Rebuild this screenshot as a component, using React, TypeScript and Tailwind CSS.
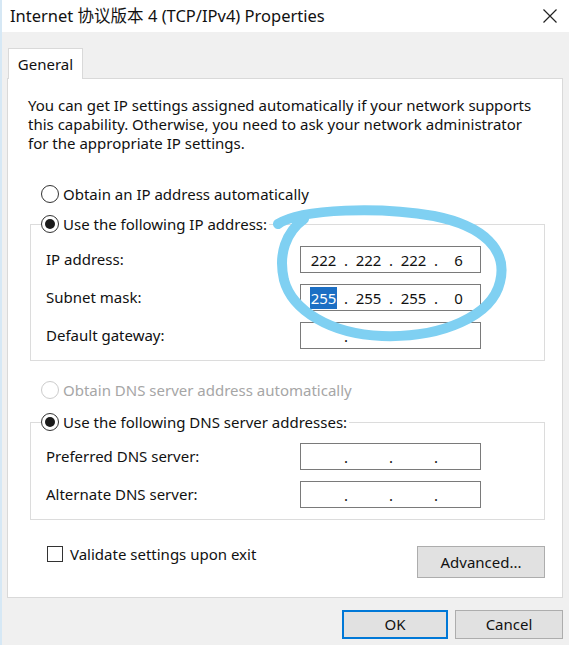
import React from "react";

const font = { fontFamily: '"Noto Sans", "Noto Sans CJK SC", sans-serif' };

function Radio({ checked, disabled }: { checked?: boolean; disabled?: boolean }) {
  return (
    <span
      className={`flex items-center justify-center w-[18px] h-[18px] rounded-full border bg-white shrink-0 ${
        disabled ? "border-[#cccccc]" : "border-[#333333]"
      }`}
    >
      {checked && <span className="w-[10px] h-[10px] rounded-full bg-[#1a1a1a]" />}
    </span>
  );
}

function IpField({
  octets,
  dots = [true, true, true],
  highlightFirst,
}: {
  octets: string[];
  dots?: boolean[];
  highlightFirst?: boolean;
}) {
  return (
    <div className="w-[181px] h-[27px] border border-[#7a7a7a] bg-white flex items-center pl-[5px] text-[15px] text-[#111]">
      {[0, 1, 2, 3].map((i) => (
        <React.Fragment key={i}>
          <span className="w-[35px] flex justify-center">
            {highlightFirst && i === 0 ? (
              <span className="bg-[#1c6fc4] text-white px-[1px] leading-[22px]">{octets[i]}</span>
            ) : (
              <span className="leading-[22px]">{octets[i]}</span>
            )}
          </span>
          {i < 3 && <span className="w-[10px] text-center leading-[22px]">{dots[i] ? "." : ""}</span>}
        </React.Fragment>
      ))}
    </div>
  );
}

function Row({ label, children }: { label: string; children: React.ReactNode }) {
  return (
    <div className="flex items-center h-[27px]">
      <span className="w-[254px] text-[15px]">{label}</span>
      {children}
    </div>
  );
}

export default function App() {
  return (
    <div
      className="relative w-[569px] h-[645px] bg-[#f0f0f0] overflow-hidden text-[#111] border-l-2 border-[#d6e8f5]"
      style={font}
    >
      {/* Title bar */}
      <div className="h-[32px] bg-white flex items-center justify-between pl-[8px] pr-[10px]">
        <span className="text-[16.5px] text-[#111]">Internet 协议版本 4 (TCP/IPv4) Properties</span>
        <svg width="16" height="16" viewBox="0 0 16 16" className="mr-[1px]">
          <path d="M1.5 1.5 L14.5 14.5 M14.5 1.5 L1.5 14.5" stroke="#222" strokeWidth="1.2" fill="none" />
        </svg>
      </div>

      {/* Tab */}
      <div className="pt-[16px] pl-[6px] bg-[#f0f0f0]">
        <div className="w-[75px] h-[31px] bg-white border border-b-0 border-[#d9d9d9] flex items-center justify-center text-[15px] relative z-10">
          General
        </div>
      </div>

      {/* Panel */}
      <div className="ml-[5px] w-[556px] h-[520px] -mt-px bg-white border border-[#d9d9d9] flex flex-col pl-[20px] pt-[17px]">
        <p className="text-[15px] leading-[19px] w-[506px]">
          You can get IP settings assigned automatically if your network supports this capability. Otherwise, you
          need to ask your network administrator for the appropriate IP settings.
        </p>

        <div className="mt-[31px] ml-[13px] flex items-center gap-[4px] h-[20px] text-[15px]">
          <Radio />
          <span>Obtain an IP address automatically</span>
        </div>

        <fieldset className="mt-[10px] ml-[2px] w-[515px] border border-[#dcdcdc] pb-[11px]">
          <legend className="ml-[10px] flex items-center gap-[4px] h-[20px] text-[15px] pr-[2px]">
            <Radio checked />
            <span>Use the following IP address:</span>
          </legend>
          <div className="flex flex-col gap-[11px] mt-[12px] pl-[15px]">
            <Row label="IP address:">
              <IpField octets={["222", "222", "222", "6"]} />
            </Row>
            <Row label="Subnet mask:">
              <IpField octets={["255", "255", "255", "0"]} highlightFirst />
            </Row>
            <Row label="Default gateway:">
              <IpField octets={["", "", "", ""]} dots={[true, false, false]} />
            </Row>
          </div>
        </fieldset>

        <div className="mt-[19px] ml-[13px] flex items-center gap-[4px] h-[20px] text-[15px] text-[#a6a6a6]">
          <Radio disabled />
          <span>Obtain DNS server address automatically</span>
        </div>

        <fieldset className="mt-[12px] ml-[2px] w-[515px] border border-[#dcdcdc] pb-[11px]">
          <legend className="ml-[10px] flex items-center gap-[4px] h-[20px] text-[15px] pr-[2px]">
            <Radio checked />
            <span>Use the following DNS server addresses:</span>
          </legend>
          <div className="flex flex-col gap-[11px] mt-[11px] pl-[15px]">
            <Row label="Preferred DNS server:">
              <IpField octets={["", "", "", ""]} />
            </Row>
            <Row label="Alternate DNS server:">
              <IpField octets={["", "", "", ""]} />
            </Row>
          </div>
        </fieldset>

        <div className="mt-[26px] flex items-start w-[517px]">
          <div className="flex items-center gap-[7px] ml-[19px] -mt-[3px]">
            <span className="w-[16px] h-[16px] border border-[#333] bg-white" />
            <span className="text-[15px]">Validate settings upon exit</span>
          </div>
          <button className="ml-auto w-[128px] h-[32px] bg-[#e1e1e1] border border-[#adadad] text-[15px]">
            Advanced...
          </button>
        </div>
      </div>

      {/* Bottom buttons */}
      <div className="flex justify-end gap-[7px] pr-[6px] mt-[12px]">
        <button className="w-[106px] h-[29px] bg-[#e1e1e1] border-2 border-[#0078d7] text-[15px]">OK</button>
        <button className="w-[108px] h-[29px] bg-[#e1e1e1] border border-[#adadad] text-[15px]">Cancel</button>
      </div>

      {/* Hand-drawn annotation */}
      <svg className="absolute left-0 top-0 pointer-events-none" width="569" height="645" viewBox="0 0 569 645">
        <path
          d="M 276 224 C 300 208, 380 207, 432 216 C 482 226, 506 250, 498 282 C 490 316, 440 338, 380 336 C 328 334, 290 310, 282 280 C 276 254, 284 232, 302 219"
          stroke="#7fd0f2"
          strokeWidth="10"
          strokeLinecap="round"
          fill="none"
        />
      </svg>
    </div>
  );
}
